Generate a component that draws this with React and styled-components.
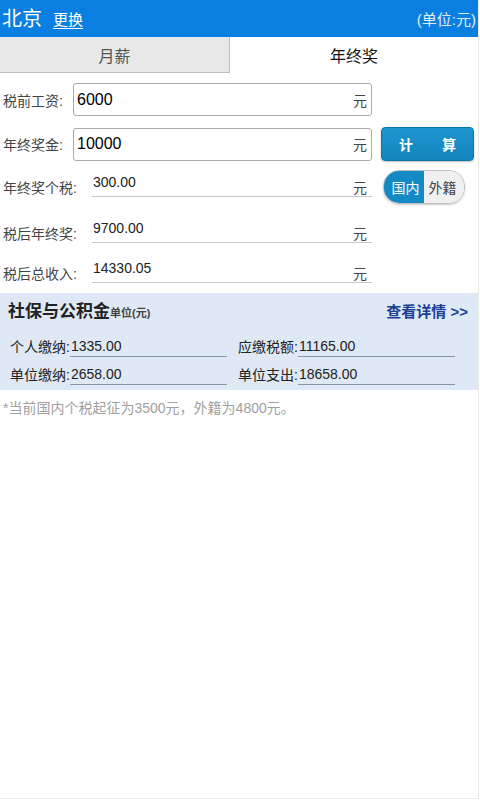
import React, { useState } from "react";
import styled, { createGlobalStyle } from "styled-components";

const GlobalStyle = createGlobalStyle`
  html, body {
    margin: 0;
    padding: 0;
    background: #fff;
  }
  body {
    font-family: "Liberation Sans", Arial, "Noto Sans CJK SC", sans-serif;
  }
`;

const Page = styled.div`
  width: 478px;
  height: 798px;
  border-right: 1px solid #eceae4;
  border-bottom: 1px solid #eceae4;
  background: #fff;
  overflow: hidden;
`;

const Header = styled.div`
  height: 37px;
  background: #0a7fe2;
  display: flex;
  align-items: center;
  padding: 0 2px;
  color: #fff;
`;

const City = styled.span`
  font-size: 20px;
  line-height: 1;
  margin-right: 11px;
`;

const Change = styled.a`
  font-size: 15px;
  color: #fff;
  text-decoration: underline;
  text-underline-offset: 3px;
`;

const Unit = styled.span`
  margin-left: auto;
  font-size: 15px;
  color: #e4ecf4;
`;

const Tabs = styled.div`
  display: flex;
  height: 36px;
`;

const Tab = styled.div`
  flex: ${({ $active }) => ($active ? "1" : "0 0 229px")};
  display: flex;
  align-items: center;
  justify-content: center;
  font-size: 16px;
  background: ${({ $active }) => ($active ? "#fff" : "#e8e8e8")};
  color: ${({ $active }) => ($active ? "#111" : "#555")};
  border-right: ${({ $active }) => ($active ? "none" : "1px solid #bdbdbd")};
  border-bottom: ${({ $active }) => ($active ? "none" : "1px solid #bdbdbd")};
`;

const Form = styled.div`
  display: flex;
  flex-direction: column;
  padding: 10px 0 0 3px;
`;

const Row = styled.div`
  display: flex;
  align-items: center;
  height: ${({ $h }) => $h || 40}px;
  margin-bottom: ${({ $mb }) => $mb || 0}px;
`;

const Label = styled.span`
  width: ${({ $w }) => $w || 70}px;
  font-size: 14px;
  color: #444;
  white-space: nowrap;
`;

const InputBox = styled.div`
  width: 299px;
  height: 33px;
  box-sizing: border-box;
  border: 1px solid #a9a9a9;
  border-radius: 3px;
  display: flex;
  align-items: center;
  padding: 0 4px 0 3px;
  background: #fff;
`;

const Value = styled.span`
  flex: 1;
  font-size: 16px;
  color: #000;
`;

const Yuan = styled.span`
  font-size: 14px;
  color: #444;
`;

const OutLine = styled.div`
  width: 280px;
  height: 18px;
  box-sizing: border-box;
  border-bottom: 1px solid #c8c8c8;
  display: flex;
  align-items: flex-end;
  justify-content: space-between;
  padding: 0 5px 0 1px;
  margin-top: 1px;
`;

const OutValue = styled.span`
  font-size: 14px;
  line-height: 14px;
  color: #222;
  align-self: flex-start;
  margin-top: -4px;
`;

const OutYuan = styled.span`
  font-size: 14px;
  color: #444;
  line-height: 14px;
  margin-bottom: 1px;
`;

const CalcButton = styled.button`
  margin-left: 9px;
  width: 93px;
  height: 34px;
  border: 1px solid #0d74aa;
  border-radius: 4px;
  background: linear-gradient(#1f96cf, #1383bd);
  color: #fff;
  font-family: "Noto Sans CJK SC", sans-serif;
  font-size: 14px;
  font-weight: bold;
  display: flex;
  align-items: center;
  justify-content: space-between;
  padding: 0 17px;
  box-shadow: 0 1px 2px rgba(0, 0, 0, 0.25);
`;

const Toggle = styled.div`
  margin-left: 11px;
  width: 80px;
  height: 32px;
  display: flex;
  border-radius: 16px;
  overflow: hidden;
  border: 1px solid #bfbfbf;
  box-shadow: 0 1px 2px rgba(0, 0, 0, 0.2);
`;

const ToggleItem = styled.div`
  flex: 1;
  display: flex;
  align-items: center;
  justify-content: center;
  font-size: 14px;
  background: ${({ $on }) => ($on ? "#138ac4" : "#f0f0f0")};
  color: ${({ $on }) => ($on ? "#fff" : "#444")};
  padding-left: ${({ $on }) => ($on ? "3px" : "0")};
  padding-right: ${({ $on }) => ($on ? "0" : "3px")};
`;

const Section = styled.div`
  background: #dfe8f5;
  padding: 4px 10px 6px 8px;
`;

const SectionHead = styled.div`
  display: flex;
  align-items: baseline;
  margin-bottom: 9px;
`;

const SectionTitle = styled.span`
  font-family: "Noto Sans CJK SC", serif;
  font-size: 17px;
  font-weight: bold;
  color: #222;
`;

const SectionUnit = styled.span`
  font-size: 11px;
  font-weight: bold;
  color: #444;
`;

const Detail = styled.a`
  margin-left: auto;
  font-size: 15px;
  font-weight: bold;
  color: #1a3f94;
`;

const Grid = styled.div`
  display: grid;
  grid-template-columns: 228px 228px;
  row-gap: 3px;
  padding-left: 2px;
`;

const Cell = styled.div`
  display: flex;
  align-items: flex-end;
  height: 25px;
`;

const CellLabel = styled.span`
  font-size: 14px;
  color: #222;
  white-space: nowrap;
`;

const CellValue = styled.span`
  flex: 0 0 156px;
  border-bottom: 1px solid #8a96a8;
  font-size: 14px;
  color: #222;
  padding-left: 1px;
  line-height: 19px;
  margin-bottom: -1px;
`;

const Note = styled.div`
  padding: 7px 3px;
  font-size: 14px;
  color: #a0a0a0;
`;

export default function App() {
  const [domestic, setDomestic] = useState(true);
  const outputs = [
    { label: "年终奖个税:", value: "300.00", toggle: true },
    { label: "税后年终奖:", value: "9700.00" },
    { label: "税后总收入:", value: "14330.05" },
  ];
  const fund = [
    ["个人缴纳:", "1335.00"],
    ["应缴税额:", "11165.00"],
    ["单位缴纳:", "2658.00"],
    ["单位支出:", "18658.00"],
  ];

  return (
    <>
      <GlobalStyle />
      <Page>
        <Header>
          <City>北京</City>
          <Change>更换</Change>
          <Unit>(单位:元)</Unit>
        </Header>
        <Tabs>
          <Tab>月薪</Tab>
          <Tab $active>年终奖</Tab>
        </Tabs>
        <Form>
          <Row $h={33} $mb={11}>
            <Label>税前工资:</Label>
            <InputBox>
              <Value>6000</Value>
              <Yuan>元</Yuan>
            </InputBox>
          </Row>
          <Row $h={34} $mb={8}>
            <Label>年终奖金:</Label>
            <InputBox>
              <Value>10000</Value>
              <Yuan>元</Yuan>
            </InputBox>
            <CalcButton>
              <span>计</span>
              <span>算</span>
            </CalcButton>
          </Row>
          {outputs.map((o) => (
            <Row key={o.label} $h={o.toggle ? 36 : 40} $mb={o.toggle ? 8 : 0}>
              <Label $w={89}>{o.label}</Label>
              <OutLine>
                <OutValue>{o.value}</OutValue>
                <OutYuan>元</OutYuan>
              </OutLine>
              {o.toggle && (
                <Toggle>
                  <ToggleItem $on={domestic} onClick={() => setDomestic(true)}>
                    国内
                  </ToggleItem>
                  <ToggleItem $on={!domestic} onClick={() => setDomestic(false)}>
                    外籍
                  </ToggleItem>
                </Toggle>
              )}
            </Row>
          ))}
        </Form>
        <Section>
          <SectionHead>
            <SectionTitle>社保与公积金</SectionTitle>
            <SectionUnit>单位(元)</SectionUnit>
            <Detail>查看详情 &gt;&gt;</Detail>
          </SectionHead>
          <Grid>
            {fund.map(([l, v]) => (
              <Cell key={l}>
                <CellLabel>{l}</CellLabel>
                <CellValue>{v}</CellValue>
              </Cell>
            ))}
          </Grid>
        </Section>
        <Note>*当前国内个税起征为3500元，外籍为4800元。</Note>
      </Page>
    </>
  );
}
